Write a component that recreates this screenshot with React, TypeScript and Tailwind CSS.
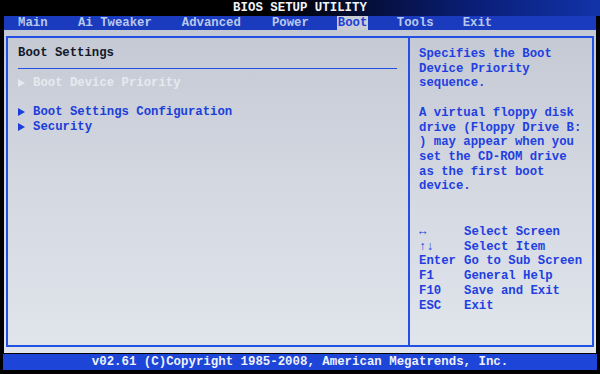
import React from 'react'

const mono = "font-['Liberation_Mono','DejaVu_Sans_Mono',monospace]"

const tabs = [
  { label: 'Main', x: 'ml-[13px]' },
  { label: 'Ai Tweaker', x: 'ml-[28.5px]' },
  { label: 'Advanced', x: 'ml-[28px]' },
  { label: 'Power', x: 'ml-[29px]' },
  { label: 'Boot', x: 'ml-[27px]', active: true },
  { label: 'Tools', x: 'ml-[27.5px]' },
  { label: 'Exit', x: 'ml-[27px]' },
]

const help = [
  ['↔', 'Select Screen'],
  ['↑↓', 'Select Item'],
  ['Enter', 'Go to Sub Screen'],
  ['F1', 'General Help'],
  ['F10', 'Save and Exit'],
  ['ESC', 'Exit'],
]

function Arrow({ className }: { className: string }) {
  return (
    <svg width="7" height="8" viewBox="0 0 7 8" className={className}>
      <path d="M0 0 L7 4 L0 8 Z" fill="currentColor" />
    </svg>
  )
}

export default function App() {
  return (
    <div className={`w-[600px] h-[374px] bg-black flex flex-col overflow-hidden ${mono} font-bold text-[12.3px] leading-[14.7px]`}>
      {/* title strip */}
      <div className="h-[16px] flex items-center justify-center bg-[linear-gradient(to_right,#000_45%,#0a1f7a_80%,#1233a8)] text-[#f2f4fa] text-[12.4px] pt-[1px]">
        BIOS SETUP UTILITY
      </div>

      {/* menu bar */}
      <div className="mx-[4px] h-[14px] bg-[#1a3bbd] flex items-stretch text-[#b9c9ee]">
        {tabs.map((t) => (
          <div
            key={t.label}
            className={`${t.x} px-[1px] flex items-center ${t.active ? 'bg-[#c9cdd6] text-[#1d3fd6]' : ''}`}
          >
            {t.label}
          </div>
        ))}
      </div>

      {/* body */}
      <div className="mx-[4px] h-[323px] bg-[linear-gradient(to_bottom,#c4c9d4,#d5dae3_55%,#e1e5ec)] pl-[2px] pr-[2px] pt-[6px] pb-[6px] flex">
        <div className="flex-1 border-2 border-[#2150e2] flex">
          {/* left panel */}
          <div className="w-[402px] border-r-2 border-[#2150e2] pl-[10px] pt-[8px]">
            <div className="text-[#121829]">Boot Settings</div>
            <div className="mt-[7px] mr-[11px] h-[1px] bg-[#2150e2]" />
            <div className="mt-[7px] flex items-center text-[#e6eaf0]">
              <Arrow className="mr-[8px]" />
              <span>Boot Device Priority</span>
            </div>
            <div className="h-[14.7px]" />
            <div className="flex items-center text-[#1c3ed8]">
              <Arrow className="mr-[8px]" />
              <span>Boot Settings Configuration</span>
            </div>
            <div className="flex items-center text-[#1c3ed8]">
              <Arrow className="mr-[8px]" />
              <span>Security</span>
            </div>
          </div>

          {/* right panel */}
          <div className="flex-1 pl-[9px] pt-[9px] text-[#1f40e0]">
            <div>Specifies the Boot</div>
            <div>Device Priority</div>
            <div>sequence.</div>
            <div className="h-[14.7px]" />
            <div>A virtual floppy disk</div>
            <div>drive (Floppy Drive B:</div>
            <div>) may appear when you</div>
            <div>set the CD-ROM drive</div>
            <div>as the first boot</div>
            <div>device.</div>
            <div className="mt-[31px]">
              {help.map(([k, d]) => (
                <div key={k} className="flex">
                  <span className="w-[45px]">{k}</span>
                  <span>{d}</span>
                </div>
              ))}
            </div>
          </div>
        </div>
      </div>

      {/* footer */}
      <div className="mx-[3px] mt-[1px] h-[16px] bg-[#1d45d8] flex items-center justify-center text-[#eef1fa] text-[12.4px]">
        v02.61 (C)Copyright 1985-2008, American Megatrends, Inc.
      </div>
    </div>
  )
}
